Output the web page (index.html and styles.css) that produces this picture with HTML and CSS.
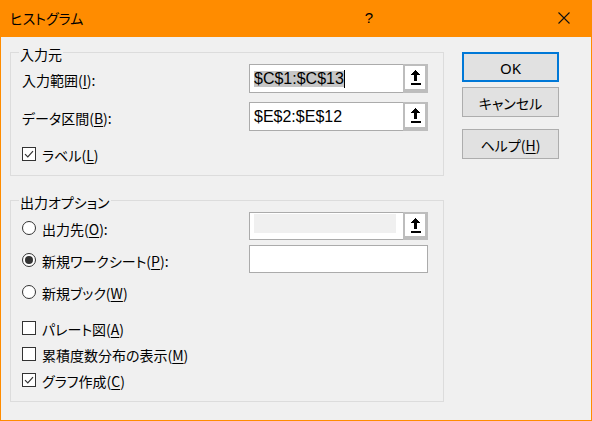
FILE: index.html
```html
<!DOCTYPE html>
<html lang="ja">
<head>
<meta charset="utf-8">
<title>ヒストグラム</title>
<link rel="stylesheet" href="styles.css">
</head>
<body>
<div class="dialog">
  <div class="titlebar">
    <span class="title">ヒストグラム</span>
    <span class="cap-btn help">?</span>
    <span class="cap-btn close"><svg width="12" height="12" viewBox="0 0 12 12"><path d="M0.5 0.5 L11.5 11.5 M11.5 0.5 L0.5 11.5" stroke="#111" stroke-width="1.1" fill="none"/></svg></span>
  </div>
  <div class="body">
    <div class="left">
      <div class="group g1">
        <div class="legend">入力元</div>
        <div class="row r-field">
          <div class="label">入力範囲(<u>I</u>):</div>
          <div class="field">
            <div class="input"><span class="sel">$C$1:$C$13</span><span class="caret"></span></div>
            <div class="browse"><svg width="11" height="16" viewBox="0 0 11 16" shape-rendering="crispEdges"><polygon points="5.5,0 10.5,5 0.5,5" fill="#000"/><rect x="4" y="5" width="3" height="6" fill="#000"/><rect x="0.5" y="13" width="10" height="2" fill="#000"/></svg></div>
          </div>
        </div>
        <div class="row r-field r2">
          <div class="label">データ区間(<u>B</u>):</div>
          <div class="field">
            <div class="input"><span class="val">$E$2:$E$12</span></div>
            <div class="browse"><svg width="11" height="16" viewBox="0 0 11 16" shape-rendering="crispEdges"><polygon points="5.5,0 10.5,5 0.5,5" fill="#000"/><rect x="4" y="5" width="3" height="6" fill="#000"/><rect x="0.5" y="13" width="10" height="2" fill="#000"/></svg></div>
          </div>
        </div>
        <div class="row r-check r3">
          <span class="box checked"><svg width="12" height="12" viewBox="0 0 12 12"><polyline points="2,6.2 4.8,9 10,3.2" fill="none" stroke="#333" stroke-width="1.2"/></svg></span>
          <span class="text">ラベル(<u>L</u>)</span>
        </div>
      </div>
      <div class="group g2">
        <div class="legend">出力オプション</div>
        <div class="row r-radio">
          <div class="label"><span class="radio"></span><span class="text">出力先(<u>O</u>):</span></div>
          <div class="field fa">
            <div class="input disabled"><span class="inner"></span></div>
            <div class="browse"><svg width="11" height="16" viewBox="0 0 11 16" shape-rendering="crispEdges"><polygon points="5.5,0 10.5,5 0.5,5" fill="#000"/><rect x="4" y="5" width="3" height="6" fill="#000"/><rect x="0.5" y="13" width="10" height="2" fill="#000"/></svg></div>
          </div>
        </div>
        <div class="row r-radio">
          <div class="label"><span class="radio on"></span><span class="text">新規ワークシート(<u>P</u>):</span></div>
          <div class="field fb">
            <div class="input"></div>
          </div>
        </div>
        <div class="row r-radio">
          <div class="label"><span class="radio"></span><span class="text">新規ブック(<u>W</u>)</span></div>
        </div>
        <div class="row r-check r4">
          <span class="box"></span>
          <span class="text">パレート図(<u>A</u>)</span>
        </div>
        <div class="row r-check">
          <span class="box"></span>
          <span class="text">累積度数分布の表示(<u>M</u>)</span>
        </div>
        <div class="row r-check">
          <span class="box checked"><svg width="12" height="12" viewBox="0 0 12 12"><polyline points="2,6.2 4.8,9 10,3.2" fill="none" stroke="#333" stroke-width="1.2"/></svg></span>
          <span class="text">グラフ作成(<u>C</u>)</span>
        </div>
      </div>
    </div>
    <div class="right">
      <div class="btn default">OK</div>
      <div class="btn cancel">キャンセル</div>
      <div class="btn helpbtn">ヘルプ(<u>H</u>)</div>
    </div>
  </div>
</div>
</body>
</html>
```
FILE: styles.css
```css
* { box-sizing: border-box; }
html, body { margin: 0; padding: 0; }
body {
  width: 592px;
  height: 421px;
  overflow: hidden;
  background: #F0F0F0;
  font-family: "Noto Sans CJK JP", "Noto Sans", sans-serif;
  font-feature-settings: "palt";
  font-size: 14px;
  color: #000;
}
u { text-decoration: underline; text-underline-offset: 2px; text-decoration-thickness: 1px; }

.dialog {
  width: 592px;
  height: 421px;
  border: 1px solid #FF8C00;
  background: #F0F0F0;
  display: flex;
  flex-direction: column;
}
.titlebar {
  height: 36px;
  flex: none;
  background: #FF8C00;
  display: flex;
  align-items: center;
  padding-left: 9px;
  padding-right: 4px;
}
.title { flex: 1; font-size: 14px; line-height: 20px; padding-bottom: 3px; }
.cap-btn { width: 46px; height: 36px; display: flex; align-items: center; justify-content: center; }
.help { font-family: "Liberation Sans", sans-serif; font-size: 15px; margin-right: 149px; padding-bottom: 3px; }
.close { padding-bottom: 3px; }

.body {
  flex: 1;
  display: flex;
  padding: 15px 0 0 9px;
}
.left { width: 434px; flex: none; }
.group {
  border: 1px solid #DCDCDC;
  padding: 0 14px 0 11px;
}
.g1 { height: 124px; }
.g2 { height: 202px; margin-top: 24px; }
.legend {
  width: fit-content;
  margin: -9px 0 0 -3px;
  padding: 0 1px;
  line-height: 20px;
  height: 20px;
  background: #F0F0F0;
}

.row { display: flex; align-items: center; }
.r-field { height: 29px; }
.r2 { margin-top: 9px; }
.r-field .label { width: 227px; padding-top: 3px; line-height: 20px; }
.field { display: flex; width: 179px; height: 29px; }
.input {
  flex: 1;
  background: #fff;
  border: 1px solid #ABABAB;
  display: flex;
  align-items: center;
  padding-left: 4px;
  font-family: "Liberation Sans", sans-serif;
  font-size: 16px;
  font-feature-settings: normal;
}
.field .input { border-right: 0; }
.sel { background: #C6C6C6; line-height: 16px; height: 16px; }
.caret { width: 1px; height: 18px; background: #000; }
.val { line-height: 16px; }
.browse {
  width: 25px;
  background: #fff;
  border: 2px solid #BDBDBD;
  border-right-width: 3px;
  border-bottom-width: 4px;
  display: flex;
  align-items: center;
  justify-content: center;
  padding-top: 1px;
}

.r-check { height: 26px; }
.r3 { margin-top: 10px; }
.r4 { margin-top: 7px; }
.box {
  width: 14px;
  height: 14px;
  border: 1px solid #333;
  background: #fff;
  display: flex;
  align-items: center;
  justify-content: center;
  flex: none;
}
.text { margin-left: 6px; line-height: 20px; padding-top: 2px; }

.r-radio { height: 32px; align-items: flex-start; }
.r-radio .label { width: 227px; height: 32px; display: flex; align-items: center; }
.radio {
  width: 14px;
  height: 14px;
  border: 1px solid #333;
  border-radius: 50%;
  background: #fff;
  flex: none;
  display: flex;
  align-items: center;
  justify-content: center;
}
.radio.on::after {
  content: "";
  width: 8px;
  height: 8px;
  border-radius: 50%;
  background: #333;
}
.fa { height: 28px; }
.fb { height: 28px; margin-top: 1px; }
.fb .input { border-right: 1px solid #ABABAB; }
.disabled { align-items: flex-start; padding: 1px 7px 0 4px; }
.disabled .inner { display: block; width: 100%; height: 19px; background: #F0F0F0; }

.right {
  margin-left: 18px;
  width: 97px;
  display: flex;
  flex-direction: column;
}
.btn {
  height: 30px;
  background: #E1E1E1;
  border: 1px solid #ADADAD;
  display: flex;
  align-items: center;
  justify-content: center;
  line-height: 20px;
  padding-top: 1px;
}
.default { border: 2px solid #0078D7; font-family: "Noto Sans", sans-serif; font-size: 15px; }
.cancel { margin-top: 5px; }
.helpbtn { margin-top: 12px; }
```
